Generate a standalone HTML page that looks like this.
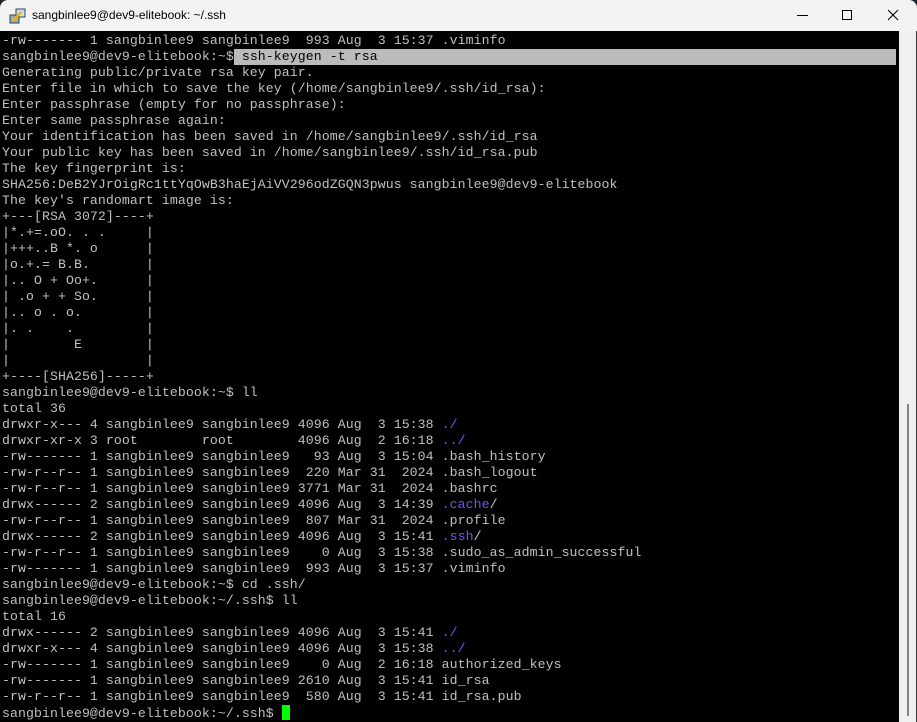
<!DOCTYPE html>
<html><head><meta charset="utf-8"><style>
*{margin:0;padding:0;box-sizing:border-box}
body{width:917px;height:722px;background:#1c2430;overflow:hidden;position:relative}
#win{position:absolute;left:0;top:0;width:917px;height:722px;background:#f3f3f3;border-radius:8px 8px 0 0;overflow:hidden}
#title{position:absolute;left:32px;top:8px;font:12px "Liberation Sans",sans-serif;color:#000}
#term{position:absolute;left:0;top:31px;width:899px;height:691px;background:#000}
#sb{position:absolute;left:899px;top:31px;width:17px;height:691px;background:#f0f0f0}
#thumb{position:absolute;left:907px;top:404px;width:2px;height:312px;background:#858585}
#edge{position:absolute;left:916px;top:31px;width:1px;height:691px;background:#3a3a3a}
pre{position:absolute;left:2px;top:33px;font-family:"Liberation Mono",monospace;font-size:13.2px;letter-spacing:0.08px;line-height:16px;color:#c0c0c0;white-space:pre}
.b{color:#5c5cff}
.sel{background:#bbbbbb;color:#000;display:inline-block;width:662px}
.cur{background:#00ff00;display:inline-block;width:8px;height:15px;vertical-align:-3px}
</style></head><body><div id="win">
<svg style="position:absolute;left:9px;top:7px" width="18" height="18" viewBox="0 0 18 18"><rect x="1" y="8" width="9" height="8" fill="#9ab" stroke="#345"/><rect x="7" y="2" width="9" height="8" fill="#cde" stroke="#345"/><path d="M4 14l8-9" stroke="#e8b800" stroke-width="2.5"/></svg>
<div id="title">sangbinlee9@dev9-elitebook: ~/.ssh</div>
<div style="position:absolute;left:797px;top:15px;width:11px;height:1px;background:#000"></div>
<div style="position:absolute;left:842px;top:10px;width:10px;height:10px;border:1px solid #000"></div>
<svg style="position:absolute;left:887px;top:9px" width="12" height="12"><path d="M1 1L11 11M11 1L1 11" stroke="#000" stroke-width="1"/></svg>
<div id="term"></div><div id="sb"></div><div id="thumb"></div><div id="edge"></div>
<pre>-rw------- 1 sangbinlee9 sangbinlee9  993 Aug  3 15:37 .viminfo
sangbinlee9@dev9-elitebook:~$<span class="sel"> ssh-keygen -t rsa</span>
Generating public/private rsa key pair.
Enter file in which to save the key (/home/sangbinlee9/.ssh/id_rsa):
Enter passphrase (empty for no passphrase):
Enter same passphrase again:
Your identification has been saved in /home/sangbinlee9/.ssh/id_rsa
Your public key has been saved in /home/sangbinlee9/.ssh/id_rsa.pub
The key fingerprint is:
SHA256:DeB2YJrOigRc1ttYqOwB3haEjAiVV296odZGQN3pwus sangbinlee9@dev9-elitebook
The key's randomart image is:
+---[RSA 3072]----+
|*.+=.oO. . .     |
|+++..B *. o      |
|o.+.= B.B.       |
|.. O + Oo+.      |
| .o + + So.      |
|.. o . o.        |
|. .    .         |
|        E        |
|                 |
+----[SHA256]-----+
sangbinlee9@dev9-elitebook:~$ ll
total 36
drwxr-x--- 4 sangbinlee9 sangbinlee9 4096 Aug  3 15:38 <span class="b">./</span>
drwxr-xr-x 3 root        root        4096 Aug  2 16:18 <span class="b">../</span>
-rw------- 1 sangbinlee9 sangbinlee9   93 Aug  3 15:04 .bash_history
-rw-r--r-- 1 sangbinlee9 sangbinlee9  220 Mar 31  2024 .bash_logout
-rw-r--r-- 1 sangbinlee9 sangbinlee9 3771 Mar 31  2024 .bashrc
drwx------ 2 sangbinlee9 sangbinlee9 4096 Aug  3 14:39 <span class="b">.cache</span>/
-rw-r--r-- 1 sangbinlee9 sangbinlee9  807 Mar 31  2024 .profile
drwx------ 2 sangbinlee9 sangbinlee9 4096 Aug  3 15:41 <span class="b">.ssh</span>/
-rw-r--r-- 1 sangbinlee9 sangbinlee9    0 Aug  3 15:38 .sudo_as_admin_successful
-rw------- 1 sangbinlee9 sangbinlee9  993 Aug  3 15:37 .viminfo
sangbinlee9@dev9-elitebook:~$ cd .ssh/
sangbinlee9@dev9-elitebook:~/.ssh$ ll
total 16
drwx------ 2 sangbinlee9 sangbinlee9 4096 Aug  3 15:41 <span class="b">./</span>
drwxr-x--- 4 sangbinlee9 sangbinlee9 4096 Aug  3 15:38 <span class="b">../</span>
-rw------- 1 sangbinlee9 sangbinlee9    0 Aug  2 16:18 authorized_keys
-rw------- 1 sangbinlee9 sangbinlee9 2610 Aug  3 15:41 id_rsa
-rw-r--r-- 1 sangbinlee9 sangbinlee9  580 Aug  3 15:41 id_rsa.pub
sangbinlee9@dev9-elitebook:~/.ssh$ <span class="cur"></span></pre>
</div></body></html>
